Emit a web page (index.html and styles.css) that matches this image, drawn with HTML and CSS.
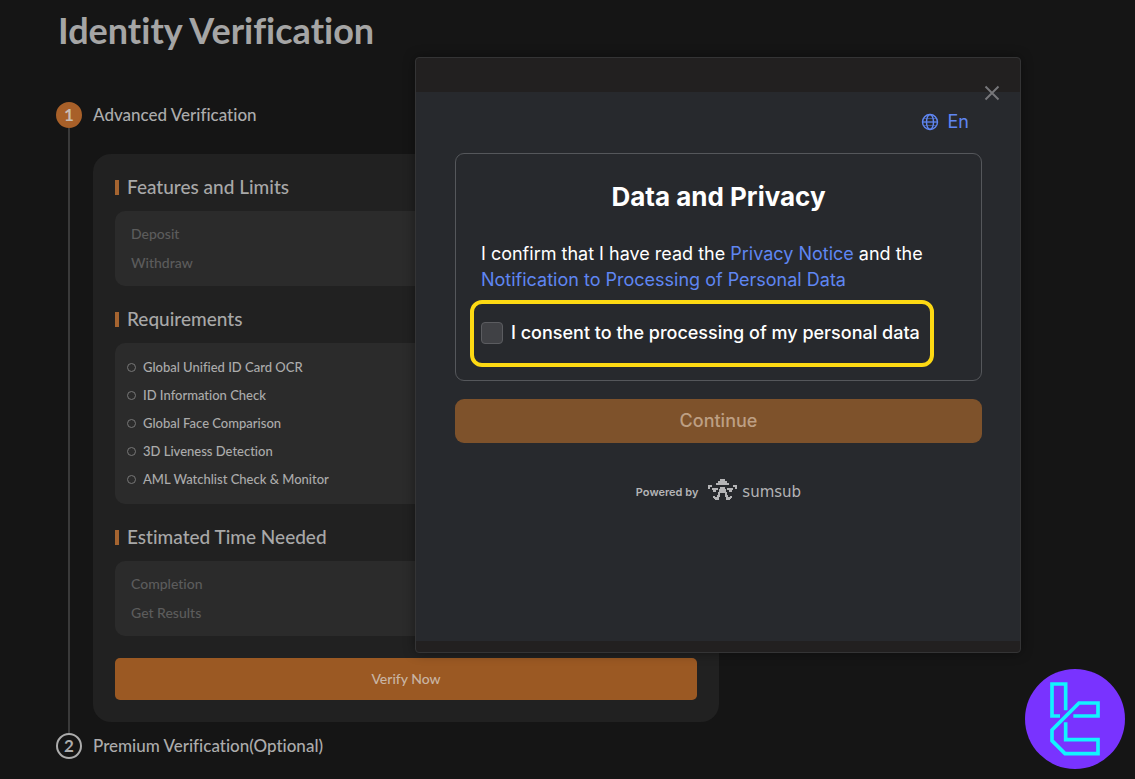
FILE: index.html
```html
<!DOCTYPE html>
<html lang="en">
<head>
<meta charset="utf-8">
<title>Identity Verification</title>
<link rel="stylesheet" href="styles.css">
</head>
<body>
<main class="page">
  <h1 class="page-title">Identity Verification</h1>
  <ol class="steps">
    <li class="step">
      <div class="rail"><span class="badge badge-active">1</span><span class="line"></span></div>
      <div class="step-body">
        <h2 class="step-title">Advanced Verification</h2>
        <section class="card">
          <h3 class="section-title">Features and Limits</h3>
          <div class="panel muted"><span>Deposit</span><span>Withdraw</span></div>
          <h3 class="section-title">Requirements</h3>
          <ul class="panel requirements">
            <li>Global Unified ID Card OCR</li>
            <li>ID Information Check</li>
            <li>Global Face Comparison</li>
            <li>3D Liveness Detection</li>
            <li>AML Watchlist Check &amp; Monitor</li>
          </ul>
          <h3 class="section-title">Estimated Time Needed</h3>
          <div class="panel muted"><span>Completion</span><span>Get Results</span></div>
          <button class="verify" type="button">Verify Now</button>
        </section>
      </div>
    </li>
    <li class="step">
      <div class="rail"><span class="badge">2</span></div>
      <h2 class="step-title">Premium Verification(Optional)</h2>
    </li>
  </ol>
</main>

<div class="modal" role="dialog" aria-labelledby="dialog-title">
  <div class="modal-head">
    <button class="close" type="button" aria-label="Close">
      <svg width="16" height="16" viewBox="0 0 16 16"><path d="M1.500 1.500l13 13M14.500 1.500l-13 13" fill="none" stroke="#77777a" stroke-width="1.900"/></svg>
    </button>
  </div>
  <div class="modal-body">
    <button class="language" type="button">
      <svg width="18" height="18" viewBox="0 0 18 18" fill="none" stroke="#5f86f2" stroke-width="1.400"><circle cx="9" cy="9" r="7.500"/><ellipse cx="9" cy="9" rx="3.500" ry="7.500"/><path d="M1.500 9h15" stroke-width="1.300"/><path d="M3 5.500h12M3 12.500h12" stroke-width=".5"/></svg>
      En
    </button>
    <section class="consent-card">
      <h2 class="consent-title" id="dialog-title">Data and Privacy</h2>
      <p class="consent-text">I confirm that I have read the <a href="#">Privacy Notice</a> and the <a href="#">Notification to Processing of Personal Data</a></p>
      <label class="consent-row"><input class="check" type="checkbox">I consent to the processing of my personal data</label>
    </section>
    <button class="continue" type="button">Continue</button>
    <div class="powered">
      <span>Powered by</span>
      <svg class="mark" width="29" height="22" viewBox="0 0 29 22" fill="#b4b4b6"><path d="M12 0h5v2h2v2h2v2H8V4h2V2h2zM0 6h4v2H2v2H0zM25 6h4v4h-2V8h-2zM4 9h6v2H8v2H5v-2H4zM25 9h-6v2h2v2h3v-2h1zM12 8h5v2h1v3h1v3h1v2h3v2h-1v1h-4v-3h-1v-4h-5v4h-1v3H7v-1H6v-2h3v-2h1v-3h1v-3h1zM5 17h2v2H5zM22 17h2v2h-2z"/></svg>
      <span class="brand">sumsub</span>
    </div>
  </div>
</div>

<svg class="watermark" width="100" height="100" viewBox="0 0 300 300"><circle cx="150" cy="150" r="150" fill="#7933ff"/><g transform="translate(-30 -27)" fill="none" stroke="#12f4ff" stroke-width="11"><path d="M152 151V72h-41v96h24"/><path d="M175 168h74v-39h-57l-81 81v32l39 39h99v-42h-97v-52"/></g></svg>
</body>
</html>
```
FILE: styles.css
```css
* { box-sizing: border-box; }
body {
  margin: 0;
  min-height: 100vh;
  position: relative;
  overflow: hidden;
  background: #151515;
  color: #acacac;
  font-family: Lato, sans-serif;
  font-variant-ligatures: none;
}
h1, h2, h3, p, ol, ul { margin: 0; padding: 0; list-style: none; font-weight: 500; }
button { border: 0; padding: 0; font: inherit; color: inherit; background: none; cursor: pointer; }

.page { padding: 10px 56px 0; }
.page-title { padding-left: 2px; font-size: 36px; line-height: 40px; font-weight: 700; color: #a5a5a5; }
.steps { margin-top: 52px; }
.step { display: flex; gap: 11px; }
.rail { display: flex; flex-direction: column; align-items: center; width: 26px; }
.badge {
  display: grid;
  place-items: center;
  width: 26px;
  height: 26px;
  border: 2px solid #acacac;
  border-radius: 50%;
  font-size: 17px;
  line-height: 22px;
  font-weight: 700;
}
.badge-active { border-color: #a86029; background: #a86029; color: #c9bdb4; }
.line { flex: 1; width: 2px; background: #3a3a3a; }
.step-body { padding-bottom: 11px; }
.step-title { font-size: 17px; line-height: 26px; }
.card { width: 626px; max-width: 100%; margin-top: 26px; padding: 21px 22px 22px; border-radius: 18px; background: #212121; }
.section-title { display: flex; align-items: center; gap: 8px; font-size: 19px; line-height: 24px; color: #a8a8a8; }
.section-title::before { content: ""; width: 4px; height: 15px; background: #a56430; }
.panel {
  display: flex;
  flex-direction: column;
  margin: 12px 0 21px;
  padding: 8px 16px 9px;
  border-radius: 10px;
  background: #2b2b2b;
  font-size: 14px;
  line-height: 29px;
}
.muted { color: #5c5c5c; }
.requirements { padding: 10px 12px 11px; font-size: 13px; line-height: 28px; }
.requirements li { display: flex; align-items: center; gap: 7px; }
.requirements li::before { content: ""; width: 7px; height: 7px; border: 1px solid #777; border-radius: 50%; }
.verify { width: 100%; margin-top: 1px; border-radius: 5px; background: #9b5923; color: #c9b5a4; font-size: 14px; line-height: 42px; }

.modal {
  position: absolute;
  top: 57px;
  left: 415px;
  width: 606px;
  padding-bottom: 11px;
  border: 1px solid #343435;
  border-radius: 4px;
  background: #222020;
  box-shadow: 0 0 12px rgba(0, 0, 0, .4);
  font-family: Inter, sans-serif;
}
.modal-head { height: 34px; }
.close { position: absolute; top: 27px; right: 20px; display: grid; }
.modal-body { display: flex; flex-direction: column; min-height: 549px; padding: 17px 38px 40px 39px; background: #27292d; }
.language { display: flex; align-items: center; align-self: flex-end; gap: 9px; margin-right: 13px; color: #5f86f2; font-size: 18px; line-height: 26px; }
.consent-card { margin-top: 18px; padding: 24px 25px 34px; border: 1px solid #55575b; border-radius: 9px; }
.consent-title { text-align: center; color: #fff; font-size: 26px; line-height: 38px; font-weight: 700; }
.consent-text { margin-top: 25px; color: #fff; font-size: 18px; line-height: 26px; font-weight: 400; }
.consent-text a { color: #5f86f2; text-decoration: none; }
.consent-row {
  position: relative;
  display: flex;
  align-items: center;
  gap: 8px;
  margin-top: 27px;
  color: #fff;
  font-size: 18px;
  line-height: 26px;
  font-weight: 500;
}
.consent-row::after {
  content: "";
  position: absolute;
  inset: -20px 22px -21px -11px;
  border: 4px solid #fdd913;
  border-radius: 12px;
}
.check { appearance: none; width: 22px; height: 22px; margin: 0; border: 1px solid #5b5c60; border-radius: 4px; background: #404145; }
.continue { margin-top: 18px; border-radius: 9px; background: #7e522b; color: #bd9f83; font-size: 18px; line-height: 44px; font-weight: 500; }
.powered { display: flex; align-items: center; justify-content: center; gap: 10px; margin-top: 36px; color: #b4b4b6; font-size: 11px; line-height: 26px; font-weight: 600; }
.mark { align-self: flex-start; }
.brand { margin-left: -5px; font-family: "DejaVu Sans", sans-serif; font-size: 15px; font-weight: 400; }
.watermark { position: absolute; right: 10px; bottom: 10px; }
```
